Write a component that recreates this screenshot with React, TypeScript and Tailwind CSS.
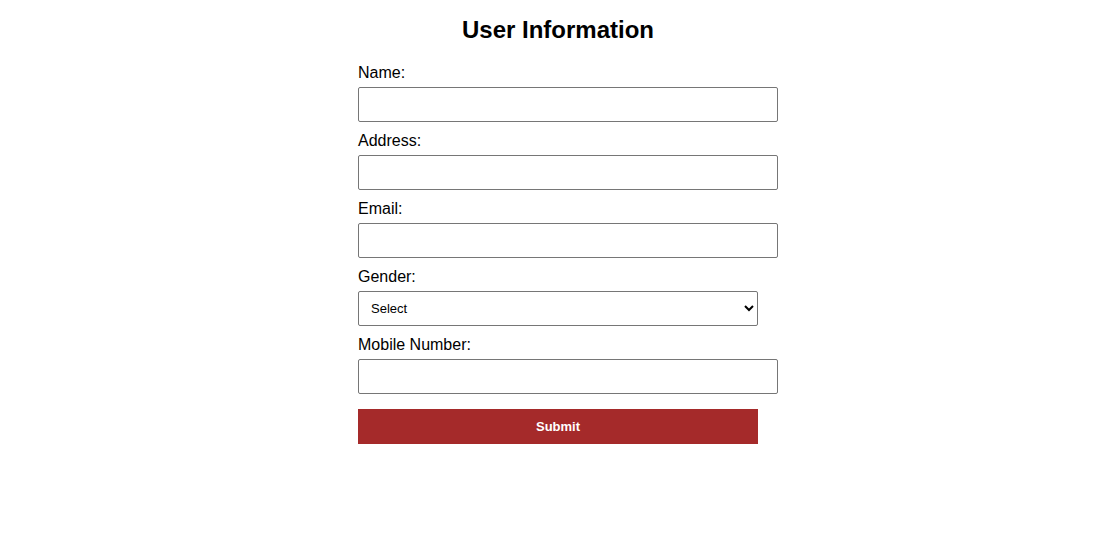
export default function App() {
  const fields = [
    { id: 'name', label: 'Name:', type: 'text' },
    { id: 'address', label: 'Address:', type: 'text' },
    { id: 'email', label: 'Email:', type: 'email' },
  ]

  return (
    <div className="min-h-screen bg-white text-black font-['Liberation_Sans',Arial,sans-serif]">
      <form className="mx-auto w-[405px] pl-[5px] pt-[16px]" onSubmit={(e) => e.preventDefault()}>
        <h2 className="text-center text-[24px] font-bold leading-[28px] mb-[20px]">User Information</h2>

        {fields.map((f) => (
          <div key={f.id}>
            <label htmlFor={f.id} className="block text-[16px] leading-[18px] mb-[5px]">
              {f.label}
            </label>
            <input
              id={f.id}
              type={f.type}
              className="block w-[420px] h-[35px] mb-[10px] px-2 border border-[#767676] rounded-[2px] bg-white text-[16px]"
            />
          </div>
        ))}

        <label htmlFor="gender" className="block text-[16px] leading-[18px] mb-[5px]">
          Gender:
        </label>
        <select
          id="gender"
          defaultValue=""
          className="block w-[400px] h-[35px] mb-[10px] pl-[8px] pr-1 border border-[#767676] rounded-[2px] bg-white text-[13px]"
        >
          <option value="">Select</option>
          <option value="male">Male</option>
          <option value="female">Female</option>
          <option value="other">Other</option>
        </select>

        <label htmlFor="mobile" className="block text-[16px] leading-[18px] mb-[5px]">
          Mobile Number:
        </label>
        <input
          id="mobile"
          type="tel"
          className="block w-[420px] h-[35px] px-2 border border-[#767676] rounded-[2px] bg-white text-[16px]"
        />

        <button
          type="submit"
          className="block mt-[15px] w-[400px] h-[35px] bg-[#a52a2a] text-white text-[13px] font-bold"
        >
          Submit
        </button>
      </form>
    </div>
  )
}
